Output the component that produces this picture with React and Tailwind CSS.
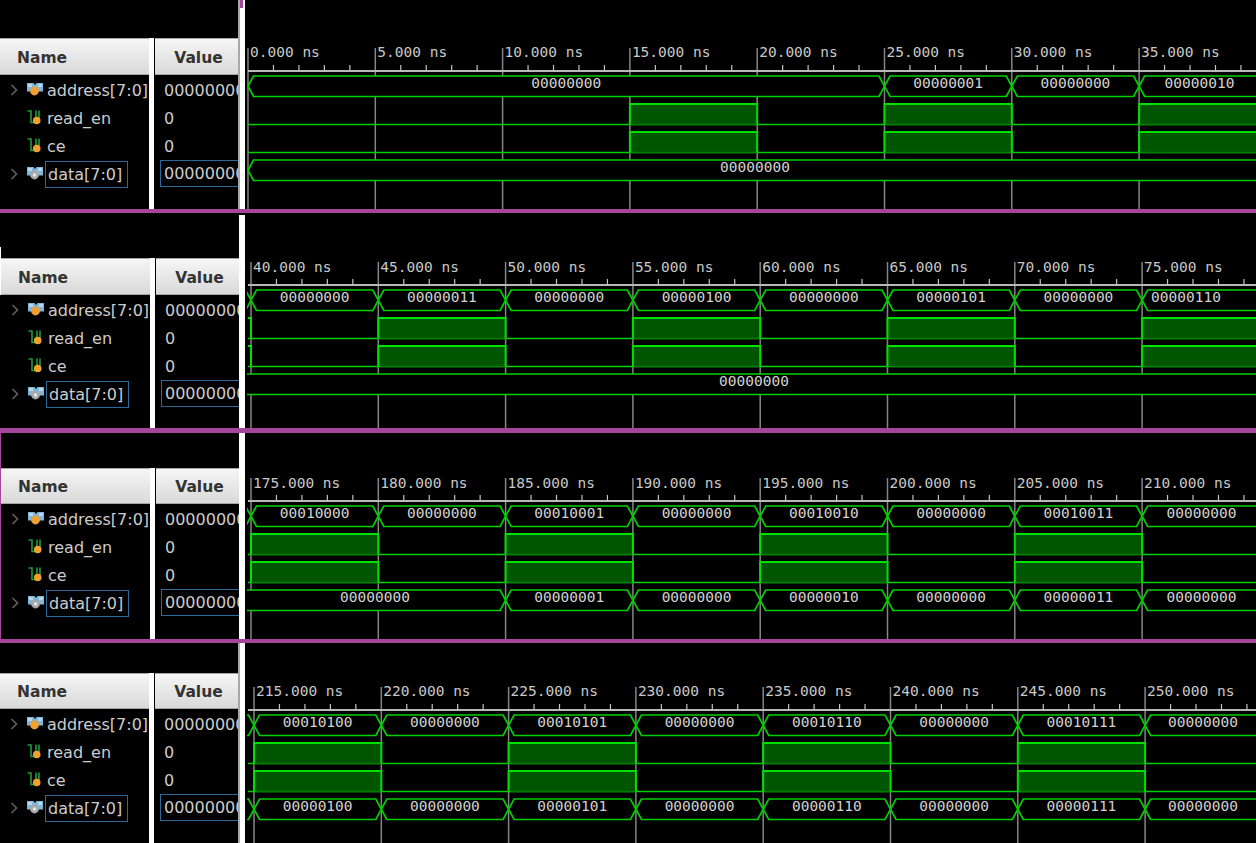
const STEP = 127.3;

const panels = [
  {
    top: 0,
    height: 209,
    x0: 248,
    base: 76,
    firstNs: 0,
    labelGap: 14,
    shell: "h-[209px]",
    nameCol: "w-[149px] pt-[38px]",
    gapCol: "pt-[38px]",
    valueCol: "w-[83px] pt-[38px]",
    head: "h-[37px] pt-[5px]",
    gutter: "w-[7px] border-l-2 border-[#a8a8a8]",
    nameHead: "pl-[17px]",
    high: [3, 5, 7],
    address: [
      [0, 5, "00000000"],
      [5, 6, "00000001"],
      [6, 7, "00000000"],
      [7, 9, "00000010", 1199.5],
    ],
    data: [[0, 12, "00000000", 755]],
  },
  {
    top: 213,
    height: 215,
    x0: 251,
    base: 290,
    firstNs: 40,
    labelGap: 13,
    shell: "h-[215px] pl-px",
    nameCol: "w-[149px] pt-[45px]",
    gapCol: "pt-[45px]",
    valueCol: "w-[83px] pt-[45px]",
    head: "h-[37px] pt-[5px]",
    gutter: "w-[6px] mt-[2px]",
    nameHead: "pl-[17px]",
    sliver: true,
    high: [-1, 1, 3, 5, 7],
    address: [
      [-1, 0, ""],
      [0, 1, "00000000"],
      [1, 2, "00000011"],
      [2, 3, "00000000"],
      [3, 4, "00000100"],
      [4, 5, "00000000"],
      [5, 6, "00000101"],
      [6, 7, "00000000"],
      [7, 9, "00000110", 1186],
    ],
    data: [[-2, 12, "00000000", 754]],
  },
  {
    top: 433,
    height: 206,
    x0: 251,
    base: 506,
    firstNs: 175,
    labelGap: 13,
    shell: "h-[206px] border-l border-[#a4479b]",
    nameCol: "w-[149px] pt-[35px]",
    gapCol: "pt-[35px]",
    valueCol: "w-[83px] pt-[35px]",
    head: "h-[36px] pt-[3px]",
    gutter: "w-[6px]",
    nameHead: "pl-[17px]",
    high: [0, 2, 4, 6],
    address: [
      [-1, 0, ""],
      [0, 1, "00010000"],
      [1, 2, "00000000"],
      [2, 3, "00010001"],
      [3, 4, "00000000"],
      [4, 5, "00010010"],
      [5, 6, "00000000"],
      [6, 7, "00010011"],
      [7, 9, "00000000", 1201.5],
    ],
    data: [
      [-2, 2, "00000000", 375],
      [2, 3, "00000001"],
      [3, 4, "00000000"],
      [4, 5, "00000010"],
      [5, 6, "00000000"],
      [6, 7, "00000011"],
      [7, 9, "00000000", 1201.5],
    ],
  },
  {
    top: 643,
    height: 200,
    x0: 254,
    base: 715,
    firstNs: 215,
    labelGap: 14,
    shell: "h-[200px]",
    nameCol: "w-[149px] pt-[30px]",
    gapCol: "pt-[30px]",
    valueCol: "w-[83px] pt-[30px]",
    head: "h-[36px] pt-[3px]",
    gutter: "w-[7px] border-l-2 border-[#a8a8a8]",
    nameHead: "pl-[17px]",
    high: [0, 2, 4, 6],
    address: [
      [-1, 0, ""],
      [0, 1, "00010100"],
      [1, 2, "00000000"],
      [2, 3, "00010101"],
      [3, 4, "00000000"],
      [4, 5, "00010110"],
      [5, 6, "00000000"],
      [6, 7, "00010111"],
      [7, 9, "00000000", 1203],
    ],
    data: [
      [-1, 0, ""],
      [0, 1, "00000100"],
      [1, 2, "00000000"],
      [2, 3, "00000101"],
      [3, 4, "00000000"],
      [4, 5, "00000110"],
      [5, 6, "00000000"],
      [6, 7, "00000111"],
      [7, 9, "00000000", 1203],
    ],
  },
];

const Chevron = () => (
  <svg width="8" height="12" viewBox="0 0 8 12" className="ml-[10px] mr-[9px] shrink-0">
    <path d="M1.5 1 L6.5 6 L1.5 11" fill="none" stroke="#5e5e5e" strokeWidth="1.7" />
  </svg>
);

const BusIcon = ({ dot, core }) => (
  <svg width="16" height="14" viewBox="0 0 16 14" className="mr-[4px] shrink-0">
    <path d="M0 0 H6.5 L8 2 L9.5 0 H16 V8.5 H0 Z" fill="#7fb6da" />
    <path d="M1 1 H5 V4 H1 Z M11 1 H15 V4 H11 Z" fill="#b5d8ee" />
    <circle cx="7.5" cy="8" r="4.4" fill={dot} />
    {core && <circle cx="7.5" cy="8" r="1.7" fill="#e8e8e8" />}
  </svg>
);

const BitIcon = () => (
  <svg width="18" height="18" viewBox="0 0 18 18" className="mr-[2px] -mt-[1px] shrink-0">
    <path d="M0.5 2 H4 V13.5 H7 M9 1.5 V9 M12 1.5 V9" fill="none" stroke="#1f9a3a" strokeWidth="1.6" />
    <circle cx="9.7" cy="11.5" r="3.8" fill="#f0a030" />
  </svg>
);

const NameRows = () => (
  <>
    <div className="flex h-7 items-center">
      <Chevron />
      <BusIcon dot="#f0a030" />
      <span className="pt-[2px]">address[7:0]</span>
    </div>
    <div className="flex h-7 items-center pl-[27px]">
      <BitIcon />
      <span className="pt-[2px]">read_en</span>
    </div>
    <div className="flex h-7 items-center pl-[27px]">
      <BitIcon />
      <span className="pt-[2px]">ce</span>
    </div>
    <div className="flex h-7 items-center">
      <Chevron />
      <BusIcon dot="#a8a8a8" core />
      <span className="-ml-[2px] h-[27px] border border-[#2a6a9a] pl-[2px] pr-[5px] leading-[25px]">data[7:0]</span>
    </div>
  </>
);

const ValueRows = () => (
  <>
    <div className="flex h-7 items-center pl-[9px] pt-[2px]">00000000</div>
    <div className="flex h-7 items-center pl-[9px] pt-[2px]">0</div>
    <div className="flex h-7 items-center pl-[9px] pt-[2px]">0</div>
    <div className="ml-[5px] flex h-[27px] w-[90px] items-center border border-[#2a6a9a] pl-[3px]">00000000</div>
  </>
);

const Bus = ({ x0, top, segments }) => {
  const bot = top + 20.5;
  const mid = top + 10.25;
  return segments.map(([from, to, label, textX]) => {
    const a = x0 + from * STEP;
    const b = x0 + to * STEP;
    return (
      <g key={from}>
        <polygon
          points={`${a},${mid} ${a + 5.5},${top} ${b - 5.5},${top} ${b},${mid} ${b - 5.5},${bot} ${a + 5.5},${bot}`}
          fill="#000"
          stroke="#00d000"
          strokeWidth="1.7"
        />
        {label && (
          <text x={textX ?? (a + b) / 2} y={top + 12.3} textAnchor="middle" className="fill-[#d2d2d2]">
            {label}
          </text>
        )}
      </g>
    );
  });
};

const Bit = ({ x0, y, high }) => {
  const low = y + 20.5;
  const left = 248;
  const right = 1256;
  return (
    <g>
      <line x1={left} x2={right} y1={low} y2={low} stroke="#00d000" strokeWidth="1.6" />
      {high.map((k) => {
        const a = Math.max(x0 + k * STEP, left);
        const b = x0 + (k + 1) * STEP;
        return (
          <g key={k}>
            {k >= 0 && <rect x={a} y={y} width={b - a} height={20.5} fill="#005500" />}
            {k >= 0 && <line x1={a} x2={b} y1={low} y2={low} stroke="#007c00" strokeWidth="1.6" />}
            <path
              d={k < 0 ? `M${a} ${y} H${b} V${low}` : `M${a} ${low} V${y} H${b} V${low}`}
              fill="none"
              stroke="#00e000"
              strokeWidth="2"
            />
          </g>
        );
      })}
    </g>
  );
};

const Wave = ({ panel }) => {
  const { top, height, x0, base, firstNs, labelGap, high, address, data } = panel;
  const ruler = base - 5;
  const marks = [0, 1, 2, 3, 4, 5, 6, 7];
  return (
    <svg
      width="1009"
      height={height}
      viewBox={`247 ${top} 1009 ${height}`}
      className="ml-[2px] shrink-0 font-['DejaVu_Sans_Mono',monospace] text-[14.5px]"
    >
      {marks.map((k) => (
        <line
          key={k}
          x1={x0 + k * STEP}
          x2={x0 + k * STEP}
          y1={ruler - 23}
          y2={top + height}
          stroke="#858585"
          strokeWidth="1.5"
        />
      ))}
      <rect x="248" y={ruler - 1} width="1008" height="2" fill="#b8b8b8" />
      {marks.map((k) =>
        [1, 2, 3, 4].map((m) => (
          <line
            key={`${k}-${m}`}
            x1={x0 + (k + m / 5) * STEP}
            x2={x0 + (k + m / 5) * STEP}
            y1={ruler - 6}
            y2={ruler}
            stroke="#c4c4c4"
            strokeWidth="1.2"
          />
        ))
      )}
      {marks.map((k) => (
        <text key={k} x={x0 + k * STEP + 2} y={ruler - labelGap} className="fill-[#c8c8c8]">
          {`${(firstNs + k * 5).toFixed(3)} ns`}
        </text>
      ))}
      <Bus x0={x0} top={base} segments={address} />
      <Bit x0={x0} y={base + 28} high={high} />
      <Bit x0={x0} y={base + 56} high={high} />
      <Bus x0={x0} top={base + 84} segments={data} />
    </svg>
  );
};

const Panel = ({ panel, first }) => (
  <section className={`relative flex overflow-hidden ${panel.shell}`}>
    {panel.sliver && <div className="absolute left-0 top-[34px] h-[48px] w-px bg-white" />}
    <div className={`shrink-0 ${panel.nameCol}`}>
      <div
        className={`mb-px flex items-center border-y border-[#a4a4a4] bg-linear-to-b from-[#f6f6f6] to-[#d9d9d9] text-[15.5px] font-bold text-[#333333] ${panel.head} ${panel.nameHead}`}
      >
        Name
      </div>
      <NameRows />
    </div>
    <div className={`h-full w-[6px] shrink-0 ${panel.gapCol}`}>
      <div className="h-full w-[5px] bg-white" />
    </div>
    <div className={`shrink-0 overflow-hidden ${panel.valueCol}`}>
      <div
        className={`mb-px flex items-center justify-center border-y border-[#a4a4a4] bg-linear-to-b from-[#f6f6f6] to-[#d9d9d9] pl-[4px] text-[15.5px] font-bold text-[#333333] ${panel.head}`}
      >
        Value
      </div>
      <ValueRows />
    </div>
    <div className={`relative shrink-0 bg-white ${panel.gutter}`}>
      {first && <div className="absolute left-0 top-0 h-[8px] w-[3px] bg-[#a4479b]" />}
    </div>
    <Wave panel={panel} />
  </section>
);

const App = () => {
  return (
    <div className="h-[843px] w-[1256px] overflow-hidden bg-black font-['DejaVu_Sans',sans-serif] text-base text-[#cccccc]">
      <Panel panel={panels[0]} first />
      <div className="h-1 bg-[#a4479b]" />
      <Panel panel={panels[1]} />
      <div className="h-[5px] bg-[#a4479b]" />
      <Panel panel={panels[2]} />
      <div className="h-1 bg-[#a4479b]" />
      <Panel panel={panels[3]} />
    </div>
  );
};

export default App;
